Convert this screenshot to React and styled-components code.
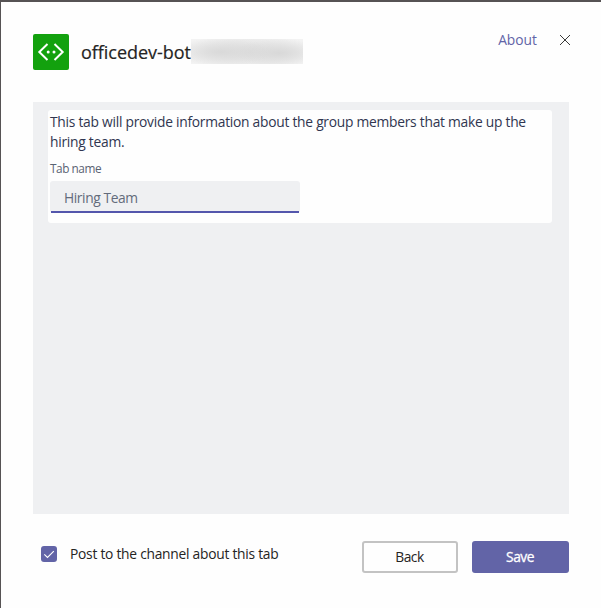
import React from "react";
import styled, { createGlobalStyle } from "styled-components";

const GlobalStyle = createGlobalStyle`
  *, *::before, *::after { box-sizing: border-box; }
  body { margin: 0; background: #fdfdfd; overflow: hidden; }
  button, input { font-family: inherit; letter-spacing: inherit; margin: 0; }
`;

const Dialog = styled.main`
  display: flex;
  flex-direction: column;
  width: 601px;
  height: 608px;
  padding: 32px 32px 0;
  border-top: 2px solid #565354;
  border-left: 1px solid #565354;
  background: #fefefe;
  color: #252423;
  font-family: "Open Sans", "Noto Sans", sans-serif;
  font-size: 13.8px;
  letter-spacing: -0.255px;
`;

const Header = styled.header`
  display: flex;
  height: 68px;
  align-items: flex-start;
`;

const AppIcon = styled.svg`
  flex: none;
  width: 36px;
  height: 36px;
  border-radius: 2px;
  background: #13a10e;
`;

const Title = styled.h1`
  flex: none;
  width: 110px;
  margin: 4px 0 0 12px;
  font-size: 18px;
  font-weight: 400;
  letter-spacing: -0.03px;
  line-height: 28px;
  white-space: nowrap;
  -webkit-text-stroke: 0.2px #252423;
`;

const Redaction = styled.span`
  width: 112px;
  height: 25px;
  margin-top: 5px;
  background:
    radial-gradient(ellipse 50px 14px at 30px 13px, #d9d9d9, rgba(217, 217, 217, 0)),
    radial-gradient(ellipse 45px 14px at 88px 14px, #d8d8d8, rgba(216, 216, 216, 0)),
    radial-gradient(ellipse 62px 20px at 58px 13px, #dfdfdf, #f3f3f3);
`;

const HeaderActions = styled.div`
  display: flex;
  align-items: center;
  height: 20px;
  margin: -4px 0 0 auto;
`;

const AboutLink = styled.a`
  color: #6264a7;
  letter-spacing: 0;
  line-height: 20px;
`;

const CloseButton = styled.button`
  display: flex;
  margin-left: 22px;
  margin-right: -2px;
  padding: 0;
  border: 0;
  background: none;
`;

const Panel = styled.section`
  flex: none;
  width: 536px;
  height: 412px;
  padding: 8px 17px 0 15px;
  background: #eff0f2;
`;

const Card = styled.div`
  height: 113px;
  padding: 2px 2px 0;
  border-radius: 3px;
  background: #fefefe;
`;

const Description = styled.p`
  margin: 0;
  color: #303650;
  line-height: 20px;
  white-space: nowrap;
`;

const Label = styled.label`
  display: block;
  margin-top: 6px;
  color: #5a6373;
  font-size: 11.8px;
  letter-spacing: -0.45px;
  line-height: 20px;
`;

const Field = styled.div`
  width: 250px;
  height: 32px;
  margin-top: 3px;
  padding: 0 1px;
  border-radius: 3px;
  background: #eff0f2;
`;

const TextInput = styled.input`
  display: block;
  width: 100%;
  height: 32px;
  padding: 3px 13px 0;
  border: 0;
  border-bottom: 2px solid #5356ac;
  border-radius: 0;
  outline: 0;
  background: transparent;
  color: #636b7b;
  font-size: 13.8px;
  letter-spacing: -0.4px;
`;

const Footer = styled.footer`
  display: flex;
  align-items: center;
  width: 536px;
  height: 32px;
  margin-top: 27px;
`;

const CheckLabel = styled.div`
  display: flex;
  align-items: center;
  gap: 13px;
  margin: -6px auto 0 8px;
  line-height: 20px;
  white-space: nowrap;
`;

const Checkbox = styled.span`
  display: flex;
  width: 16px;
  height: 16px;
  border-radius: 3px;
  background: #6264a7;
`;

const Button = styled.button`
  width: ${(p) => (p.$primary ? 97 : 96)}px;
  height: 32px;
  margin-left: ${(p) => (p.$primary ? 14 : 0)}px;
  padding: 0 1px 1px 0;
  border: ${(p) => (p.$primary ? "0" : "2px solid #c3c3c3")};
  border-radius: 3px;
  background: ${(p) => (p.$primary ? "#6264a7" : "#fefefe")};
  color: ${(p) => (p.$primary ? "#fff" : "#252423")};
  font-size: 13.8px;
  letter-spacing: -0.5px;
  -webkit-text-stroke: ${(p) => (p.$primary ? "0.3px #fff" : "0")};
`;

export default function App() {
  return (
    <>
      <GlobalStyle />
      <Dialog>
        <Header>
          <AppIcon viewBox="0 0 36 36" fill="none">
            <path d="M14.5 10 6.3 18l8.2 8M21.5 10l8.2 8-8.2 8" stroke="#fff" strokeWidth="2" />
            <circle cx="15.2" cy="18" r="1.5" fill="#fff" />
            <circle cx="21" cy="18" r="1.5" fill="#fff" />
          </AppIcon>
          <Title>officedev-bot</Title>
          <Redaction />
          <HeaderActions>
            <AboutLink>About</AboutLink>
            <CloseButton aria-label="Close">
              <svg width="12" height="12" viewBox="0 0 12 12" fill="none">
                <path d="M1 1l10 10M11 1 1 11" stroke="#3b3a39" strokeWidth="1" />
              </svg>
            </CloseButton>
          </HeaderActions>
        </Header>
        <Panel>
          <Card>
            <Description>
              This tab will provide information about the group members that make up the
              <br />
              hiring team.
            </Description>
            <Label htmlFor="tab-name">Tab name</Label>
            <Field>
              <TextInput id="tab-name" defaultValue="Hiring Team" />
            </Field>
          </Card>
        </Panel>
        <Footer>
          <CheckLabel>
            <Checkbox role="checkbox" aria-checked="true">
              <svg width="16" height="16" viewBox="0 0 16 16" fill="none">
                <path d="m3.3 8.3 3.2 3.2 6.3-6.3" stroke="#fff" strokeWidth="1.1" />
              </svg>
            </Checkbox>
            Post to the channel about this tab
          </CheckLabel>
          <Button>Back</Button>
          <Button $primary>Save</Button>
        </Footer>
      </Dialog>
    </>
  );
}
